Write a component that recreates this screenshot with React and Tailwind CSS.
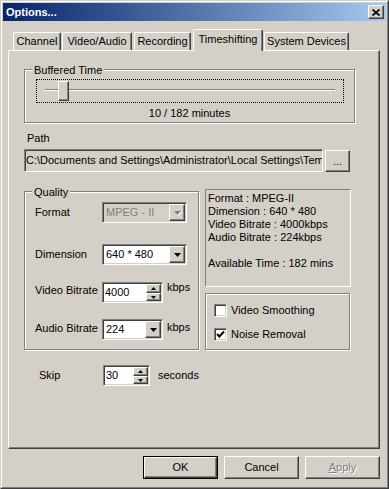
import React from 'react';

// Win2000 style bevels
const raised = 'border border-t-white border-l-white border-r-[#404040] border-b-[#404040] shadow-[inset_-1px_-1px_0_#808080] bg-[#d4d0c8]';
const sunken = 'border border-t-[#808080] border-l-[#808080] border-r-white border-b-white shadow-[inset_1px_1px_0_#404040,inset_-1px_-1px_0_#d4d0c8]';
const etched = 'border border-[#808080] shadow-[inset_1px_1px_0_#fff,1px_1px_0_#fff]';

const DownArrow = ({ disabled }) => (
    <svg width="7" height="4" viewBox="0 0 7 4" className={disabled ? 'drop-shadow-[1px_1px_0_#fff]' : ''}>
        <path d="M0 0h7L3.5 4z" fill={disabled ? '#808080' : '#000'} />
    </svg>
);

const Combo = ({ value, width, disabled }) => (
    <div className={`flex h-[21px] p-[1px] ${width} ${sunken} ${disabled ? 'bg-[#d4d0c8] text-[#808080]' : 'bg-white'}`}>
        <div className="flex-1 flex items-center pl-[2px] overflow-hidden whitespace-nowrap">{value}</div>
        <div className={`w-[16px] h-full flex items-center justify-center ${raised}`}>
            <DownArrow disabled={disabled} />
        </div>
    </div>
);

const SpinEdit = ({ value, width }) => (
    <div className={`flex h-[21px] p-[1px] bg-white ${width} ${sunken}`}>
        <div className="flex-1 flex items-center pl-[1px] overflow-hidden">{value}</div>
        <div className="w-[15px] flex flex-col">
            <div className={`h-[9px] flex items-center justify-center ${raised}`}>
                <svg width="5" height="3" viewBox="0 0 5 3"><path d="M2.5 0L5 3H0z" fill="#000" /></svg>
            </div>
            <div className={`flex-1 flex items-center justify-center ${raised}`}>
                <svg width="5" height="3" viewBox="0 0 5 3"><path d="M0 0h5L2.5 3z" fill="#000" /></svg>
            </div>
        </div>
    </div>
);

const CheckBox = ({ checked, label }) => (
    <div className="flex items-center gap-[4px] h-[13px]">
        <div className={`w-[13px] h-[13px] bg-white flex items-center justify-center ${sunken}`}>
            {checked && (
                <svg width="9" height="9" viewBox="0 0 9 9">
                    <polyline points="1,4 3.4,6.5 8,1.5" fill="none" stroke="#000" strokeWidth="1.9" />
                </svg>
            )}
        </div>
        <span>{label}</span>
    </div>
);

const Tab = ({ label, width, selected, className = '' }) => (
    <div
        className={`flex justify-center rounded-t-[2px] border-t border-l border-r border-t-white border-l-white border-r-[#404040] shadow-[inset_-1px_0_0_#808080] bg-[#d4d0c8] ${width} ${className} ${selected ? 'relative z-10 h-[22px] -mb-px pt-[3px]' : 'h-[18px] pt-[2px]'}`}
    >
        {label}
    </div>
);

const GroupLabel = ({ children }) => (
    <span className="absolute -top-[6px] left-[7px] px-[2px] bg-[#d4d0c8]">{children}</span>
);

const Button = ({ children, isDefault, disabled }) => (
    <div className={`w-[75px] h-[23px] ${isDefault ? 'border border-black' : ''}`}>
        <div className={`w-full h-full flex items-center justify-center ${raised} ${disabled ? 'text-[#808080] [text-shadow:1px_1px_0_#fff]' : ''}`}>
            {children}
        </div>
    </div>
);

export default function App() {
    return (
        <div className="w-[389px] h-[489px] bg-[#d4d0c8] border border-t-[#d4d0c8] border-l-[#d4d0c8] border-r-[#404040] border-b-[#404040] font-['Liberation_Sans',Arial,sans-serif] text-[11px] leading-[13px] text-black select-none">
            <div className="h-full border border-t-white border-l-white border-r-[#808080] border-b-[#808080] p-[1px] flex flex-col">
                {/* Title bar */}
                <div className="h-[18px] flex items-center justify-between pl-[3px] pr-[2px] bg-linear-to-r from-[#0a246a] to-[#a6caf0]">
                    <span className="font-bold text-white">Options...</span>
                    <div className={`w-[16px] h-[14px] flex items-center justify-center ${raised}`}>
                        <svg width="8" height="7" viewBox="0 0 8 7">
                            <path d="M0.5 0.5L7.5 6.5M7.5 0.5L0.5 6.5" stroke="#000" strokeWidth="1.7" />
                        </svg>
                    </div>
                </div>

                {/* Tabs */}
                <div className="flex items-end h-[29px] pl-[10px]">
                    <Tab label="Channel" width="w-[48px]" />
                    <Tab label="Video/Audio" width="w-[70px]" className="ml-[1px]" />
                    <Tab label="Recording" width="w-[57px]" className="ml-[2px]" />
                    <Tab label="Timeshifting" width="w-[70px]" className="ml-[2px]" selected />
                    <Tab label="System Devices" width="w-[85px]" className="ml-[1px]" />
                </div>

                {/* Panel */}
                <div className="ml-[5px] w-[372px] h-[399px] border border-t-white border-l-white border-r-[#404040] border-b-[#404040] shadow-[inset_-1px_-1px_0_#808080] flex flex-col">
                    {/* Buffered Time */}
                    <div className={`relative ml-[15px] mt-[18px] w-[331px] h-[54px] ${etched}`}>
                        <GroupLabel>Buffered Time</GroupLabel>
                        <div className="relative ml-[11px] mt-[9px] w-[308px] h-[24px] border border-dotted border-black">
                            <div className="absolute left-[8px] right-[8px] top-[9px] h-[2px] border-t border-b border-t-[#808080] border-b-white" />
                            <div className={`absolute left-[21px] top-[1px] w-[11px] h-[20px] ${raised}`} />
                        </div>
                        <div className="mt-[4px] text-center">10 / 182 minutes</div>
                    </div>

                    {/* Path */}
                    <div className="ml-[18px] mt-[9px]">Path</div>
                    <div className="ml-[15px] mt-[4px] flex items-start gap-[2px]">
                        <div className={`w-[299px] h-[23px] flex items-center overflow-hidden whitespace-nowrap pl-[1px] ${sunken}`}>
                            C:\Documents and Settings\Administrator\Local Settings\Tem
                        </div>
                        <div className={`mt-[1px] w-[25px] h-[22px] flex items-center justify-center ${raised}`}>...</div>
                    </div>

                    {/* Quality + info */}
                    <div className="ml-[15px] mt-[17px] flex gap-[6px]">
                        <div className={`relative mt-[2px] w-[175px] h-[159px] pl-[10px] pt-[10px] ${etched}`}>
                            <GroupLabel>Quality</GroupLabel>
                            <div className="flex items-center">
                                <span className="w-[67px]">Format</span>
                                <Combo value="MPEG - II" width="w-[85px]" disabled />
                            </div>
                            <div className="flex items-center mt-[21px]">
                                <span className="w-[67px]">Dimension</span>
                                <Combo value="640 * 480" width="w-[85px]" />
                            </div>
                            <div className="flex items-center mt-[16px]">
                                <span className="w-[67px] mb-[4px]">Video Bitrate</span>
                                <SpinEdit value="4000" width="w-[61px]" />
                                <span className="ml-[4px] mb-[10px]">kbps</span>
                            </div>
                            <div className="flex items-center mt-[15px]">
                                <span className="w-[67px] mb-[3px]">Audio Bitrate</span>
                                <Combo value="224" width="w-[61px]" />
                                <span className="ml-[4px] mb-[4px]">kbps</span>
                            </div>
                        </div>

                        <div className="flex flex-col w-[146px]">
                            <div className="h-[98px] border border-t-[#808080] border-l-[#808080] border-r-white border-b-white pl-[2px] pt-[2px]">
                                <div>Format : MPEG-II</div>
                                <div>Dimension : 640 * 480</div>
                                <div>Video Bitrate : 4000kbps</div>
                                <div>Audio Bitrate : 224kbps</div>
                                <div className="mt-[13px]">Available Time : 182 mins</div>
                            </div>
                            <div className={`mt-[6px] w-[145px] h-[57px] pl-[8px] pt-[10px] flex flex-col gap-[11px] ${etched}`}>
                                <CheckBox label="Video Smoothing" />
                                <CheckBox label="Noise Removal" checked />
                            </div>
                        </div>
                    </div>

                    {/* Skip */}
                    <div className="ml-[30px] mt-[15px] flex items-center">
                        <span className="w-[64px]">Skip</span>
                        <SpinEdit value="30" width="w-[47px]" />
                        <span className="ml-[8px]">seconds</span>
                    </div>
                </div>

                {/* Buttons */}
                <div className="ml-[5px] mt-[7px] w-[372px] flex justify-end gap-[6px]">
                    <Button isDefault>OK</Button>
                    <Button>Cancel</Button>
                    <Button disabled><span><span className="underline">A</span>pply</span></Button>
                </div>
            </div>
        </div>
    );
}
